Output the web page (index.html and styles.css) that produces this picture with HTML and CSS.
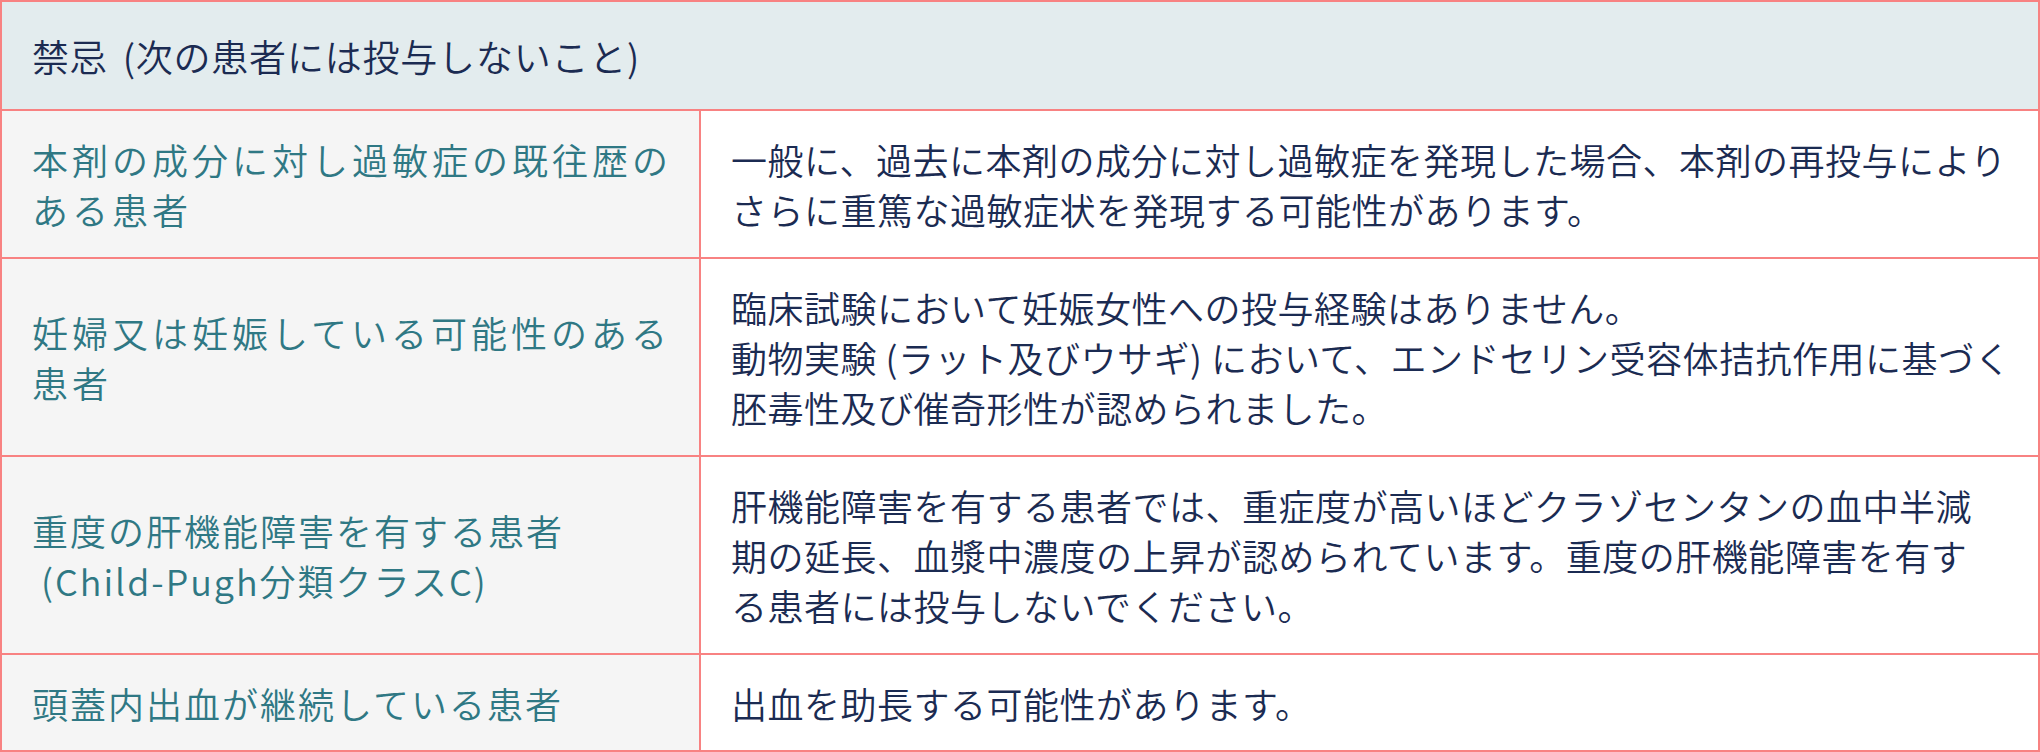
FILE: index.html
```html
<!DOCTYPE html>
<html lang="ja">
<head>
<meta charset="utf-8">
<title>禁忌</title>
<link rel="stylesheet" href="styles.css">
</head>
<body>
<div class="contra">
  <div class="contra-head">禁忌 (次の患者には投与しないこと)</div>

  <div class="cell-label"><div class="label-text label-wide">本剤の成分に対し過敏症の既往歴の<br>ある患者</div></div>
  <div class="cell-text">一般に、過去に本剤の成分に対し過敏症を発現した場合、本剤の再投与により<br>さらに重篤な過敏症状を発現する可能性があります。</div>

  <div class="cell-label"><div class="label-text label-wide">妊婦又は妊娠している可能性のある<br>患者</div></div>
  <div class="cell-text">臨床試験において妊娠女性への投与経験はありません。<br>動物実験 (ラット及びウサギ) において、エンドセリン受容体拮抗作用に基づく<br>胚毒性及び催奇形性が認められました。</div>

  <div class="cell-label"><div class="label-text">重度の肝機能障害を有する患者<br><span class="indent">(Child-Pugh分類クラスC)</span></div></div>
  <div class="cell-text">肝機能障害を有する患者では、重症度が高いほどクラゾセンタンの血中半減<br>期の延長、血漿中濃度の上昇が認められています。重度の肝機能障害を有す<br>る患者には投与しないでください。</div>

  <div class="cell-label cell-last"><div class="label-text">頭蓋内出血が継続している患者</div></div>
  <div class="cell-text cell-last">出血を助長する可能性があります。</div>
</div>
</body>
</html>
```

FILE: styles.css
```css
html, body {
  margin: 0;
  padding: 0;
  background: #ffffff;
}

body {
  font-family: "Noto Sans CJK JP", "Noto Sans", sans-serif;
  font-size: 36px;
  line-height: 50px;
  font-weight: 350;
  color: #1b2b52;
}

.contra {
  width: 2040px;
  box-sizing: border-box;
  display: grid;
  grid-template-columns: 697px 1fr;
  gap: 2px;
  border: 2px solid #f88282;
  background: #f88282;
}

.contra-head {
  grid-column: 1 / -1;
  background: #e3ecee;
  padding: 29px 30px 28px 30px;
  font-size: 37px;
  letter-spacing: 0.8px;
  word-spacing: 6px;
  color: #1b2b52;
}

.cell-label {
  background: #f5f5f5;
  color: #2f7884;
  padding: 23px 10px 23px 30px;
  display: flex;
  flex-direction: column;
  justify-content: center;
  letter-spacing: 2px;
}

.label-text {
  white-space: nowrap;
}

.label-wide {
  letter-spacing: 4px;
}

.indent {
  padding-left: 9px;
}

.cell-text {
  background: #ffffff;
  color: #1b2b52;
  padding: 23px 20px 23px 30px;
  letter-spacing: 0.5px;
  white-space: nowrap;
}

.cell-last {
  padding-bottom: 22px;
}
```
